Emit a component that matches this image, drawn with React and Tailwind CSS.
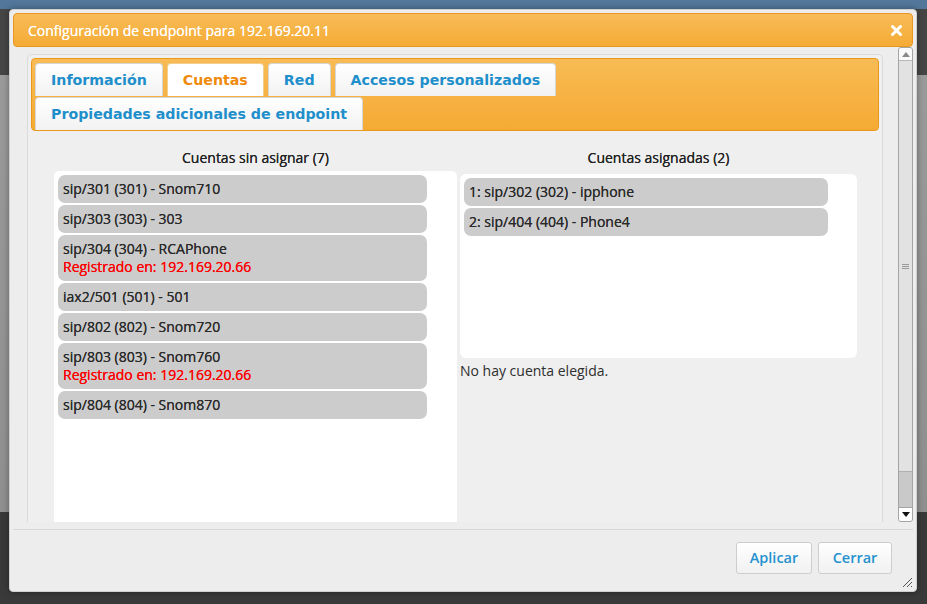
import React from 'react';

const unassigned = [
  { label: 'sip/301 (301) - Snom710' },
  { label: 'sip/303 (303) - 303' },
  { label: 'sip/304 (304) - RCAPhone', reg: '192.169.20.66' },
  { label: 'iax2/501 (501) - 501' },
  { label: 'sip/802 (802) - Snom720' },
  { label: 'sip/803 (803) - Snom760', reg: '192.169.20.66' },
  { label: 'sip/804 (804) - Snom870' },
];

const assigned = ['1: sip/302 (302) - ipphone', '2: sip/404 (404) - Phone4'];

function Tab({ label, active }) {
  return (
    <div
      className={
        active
          ? 'h-[33px] px-[15px] flex items-center rounded-t-[4px] border border-b-0 border-[#f3cf8f] bg-white text-[#f08a0a]'
          : 'h-[33px] px-[15px] flex items-center rounded-t-[4px] border border-b-0 border-[#d6d6d6] bg-[linear-gradient(to_bottom,#ffffff,#f2f2f2)] text-[#1f8fcb]'
      }
    >
      <span className="font-['DejaVu_Sans',sans-serif] font-bold text-[14.2px] leading-none">{label}</span>
    </div>
  );
}

function AccountItem({ label, reg, width }) {
  return (
    <div className={`${width} rounded-[7px] bg-[#cccccc] px-[5px] py-[5px] text-[14px] leading-[18px] text-[#2a2a2a] [text-shadow:0_0_0.4px_currentColor]`}>
      <div>{label}</div>
      {reg && <div className="text-[#ff0000]">Registrado en: {reg}</div>}
    </div>
  );
}

function Scrollbar() {
  return (
    <div className="w-[15px] h-full flex flex-col border border-[#a4a4a4] rounded-[3px] bg-[#c9c9c9] overflow-hidden">
      <div className="h-[13px] shrink-0 bg-[#fafafa] border-b border-[#b8b8b8] flex items-center justify-center">
        <svg width="8" height="5" viewBox="0 0 8 5"><path d="M0 5 L4 0 L8 5 Z" fill="#8a8a8a" /></svg>
      </div>
      <div className="flex-1 bg-[#e2e2e2] border-b border-[#b0b0b0] flex items-center justify-center">
        <svg width="7" height="7" viewBox="0 0 7 7">
          <path d="M0 1.5 H7 M0 3.5 H7 M0 5.5 H7" stroke="#9a9a9a" strokeWidth="1" />
        </svg>
      </div>
      <div className="h-[35px] shrink-0" />
      <div className="h-[14px] shrink-0 bg-white border-t border-[#a4a4a4] flex items-center justify-center">
        <svg width="8" height="5" viewBox="0 0 8 5"><path d="M0 0 L8 0 L4 5 Z" fill="#111111" /></svg>
      </div>
    </div>
  );
}

export default function App() {
  return (
    <div className="w-[927px] h-[604px] overflow-hidden pt-[9px] pl-[9px] bg-[linear-gradient(to_bottom,#52779a_0px,#52779a_9px,#454545_9px,#454545_75px,#9a9a9a_75px,#8f8f8f_512px,#393939_512px)] font-['Open_Sans',sans-serif]">
      <div className="relative w-[908px] h-[583px] rounded-[4px] border border-[#d0d0d0] bg-[#ededed] p-[3px] flex flex-col shadow-[0_0_6px_rgba(0,0,0,0.35)]">
        {/* header */}
        <div className="h-[34px] shrink-0 rounded-[4px] border border-[#e8981f] bg-[linear-gradient(to_bottom,#f8bc58,#f5ab35)] flex items-center justify-between pl-[14px] pr-[10px]">
          <span className="text-white text-[14px] [text-shadow:0_0_0.6px_#ffffff]">Configuración de endpoint para 192.169.20.11</span>
          <svg width="11" height="11" viewBox="0 0 11 11">
            <path d="M1.5 1.5 L9.5 9.5 M9.5 1.5 L1.5 9.5" stroke="white" strokeWidth="3" strokeLinecap="round" />
          </svg>
        </div>

        {/* body */}
        <div className="h-[475px] shrink-0 flex overflow-hidden">
          <div className="ml-[14px] mt-[7px] w-[856px] border border-b-0 border-[#dadada] rounded-t-[5px] bg-[#efefef] flex flex-col overflow-hidden">
            <div className="m-[3px] mb-0 h-[73px] shrink-0 rounded-[4px] border border-[#ea991c] bg-[linear-gradient(to_bottom,#f8bb55,#f5aa33)] pl-[3px] pt-[4px] flex flex-col gap-[1px]">
              <div className="flex gap-[4px]">
                <Tab label="Información" />
                <Tab label="Cuentas" active />
                <Tab label="Red" />
                <Tab label="Accesos personalizados" />
              </div>
              <div className="flex gap-[4px]">
                <Tab label="Propiedades adicionales de endpoint" />
              </div>
            </div>

            <div className="flex gap-[3px] pl-[26px] flex-1">
              <div className="w-[403px] flex flex-col">
                <div className="mt-[18px] text-center text-[14px] leading-[18px] text-[#222222] [text-shadow:0_0_0.4px_currentColor]">Cuentas sin asignar (7)</div>
                <div className="mt-[4px] flex-1 bg-white rounded-t-[5px] p-[4px] flex flex-col gap-[2px]">
                  {unassigned.map((a) => (
                    <AccountItem key={a.label} label={a.label} reg={a.reg} width="w-[369px]" />
                  ))}
                </div>
              </div>
              <div className="w-[397px] flex flex-col">
                <div className="mt-[18px] text-center text-[14px] leading-[18px] text-[#222222] [text-shadow:0_0_0.4px_currentColor]">Cuentas asignadas (2)</div>
                <div className="mt-[7px] h-[184px] bg-white rounded-[6px] p-[4px] flex flex-col gap-[2px]">
                  {assigned.map((a) => (
                    <AccountItem key={a} label={a} width="w-[364px]" />
                  ))}
                </div>
                <div className="mt-[4px] text-[14px] leading-[18px] text-[#2e2e2e]">No hay cuenta elegida.</div>
              </div>
            </div>
          </div>
          <div className="ml-[15px] h-full">
            <Scrollbar />
          </div>
        </div>

        {/* footer */}
        <div className="mt-[7px] border-t border-[#d6d6d6] flex-1 flex justify-end items-start gap-[6px] pt-[12px] pr-[21px]">
          <button className="h-[32px] w-[76px] rounded-[3px] border border-[#cdcdcd] bg-[linear-gradient(to_bottom,#ffffff,#f1f1f1)] text-[#2592cf] text-[14.5px] font-semibold">Aplicar</button>
          <button className="h-[32px] w-[74px] rounded-[3px] border border-[#cdcdcd] bg-[linear-gradient(to_bottom,#ffffff,#f1f1f1)] text-[#2592cf] text-[14.5px] font-semibold">Cerrar</button>
        </div>

        <svg className="absolute right-[3px] bottom-[3px]" width="12" height="12" viewBox="0 0 12 12">
          <path d="M11 2 L2 11 M11 6 L6 11 M11 10 L10 11" stroke="#555555" strokeWidth="1" />
        </svg>
      </div>
    </div>
  );
}
